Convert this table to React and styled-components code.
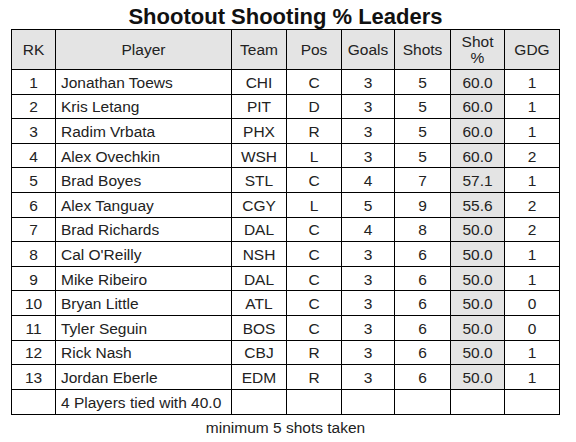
import styled, { createGlobalStyle } from "styled-components";

const GlobalStyle = createGlobalStyle`
  body {
    margin: 0;
    background: #fff;
    font-family: "Liberation Sans", Arial, sans-serif;
    color: #1a1a1a;
  }
`;

const COLS = [44, 176, 55, 55, 53, 56, 54, 55];

const leaders = [
  [1, "Jonathan Toews", "CHI", "C", 3, 5, "60.0", 1],
  [2, "Kris Letang", "PIT", "D", 3, 5, "60.0", 1],
  [3, "Radim Vrbata", "PHX", "R", 3, 5, "60.0", 1],
  [4, "Alex Ovechkin", "WSH", "L", 3, 5, "60.0", 2],
  [5, "Brad Boyes", "STL", "C", 4, 7, "57.1", 1],
  [6, "Alex Tanguay", "CGY", "L", 5, 9, "55.6", 2],
  [7, "Brad Richards", "DAL", "C", 4, 8, "50.0", 2],
  [8, "Cal O'Reilly", "NSH", "C", 3, 6, "50.0", 1],
  [9, "Mike Ribeiro", "DAL", "C", 3, 6, "50.0", 1],
  [10, "Bryan Little", "ATL", "C", 3, 6, "50.0", 0],
  [11, "Tyler Seguin", "BOS", "C", 3, 6, "50.0", 0],
  [12, "Rick Nash", "CBJ", "R", 3, 6, "50.0", 1],
  [13, "Jordan Eberle", "EDM", "R", 3, 6, "50.0", 1],
];

export default function App() {
  return (
    <Page>
      <GlobalStyle />
      <Title>Shootout Shooting % Leaders</Title>
      <Table>
        <colgroup>
          {COLS.map((w, i) => <col key={i} style={{ width: w }} />)}
        </colgroup>
        <thead>
          <tr>
            <Th>RK</Th>
            <Th>Player</Th>
            <Th>Team</Th>
            <Th>Pos</Th>
            <Th>Goals</Th>
            <Th>Shots</Th>
            <Th>Shot<br />%</Th>
            <Th>GDG</Th>
          </tr>
        </thead>
        <tbody>
          {leaders.map((r) => (
            <tr key={r[0]}>
              <Td>{r[0]}</Td>
              <Td left>{r[1]}</Td>
              <Td>{r[2]}</Td>
              <Td>{r[3]}</Td>
              <Td>{r[4]}</Td>
              <Td>{r[5]}</Td>
              <Td shaded>{r[6]}</Td>
              <Td>{r[7]}</Td>
            </tr>
          ))}
          <tr>
            <Td tall />
            <Td tall left>4 Players tied with 40.0</Td>
            <Td tall />
            <Td tall />
            <Td tall />
            <Td tall />
            <Td tall />
            <Td tall />
          </tr>
        </tbody>
      </Table>
      <Note>minimum 5 shots taken</Note>
    </Page>
  );
}

const Page = styled.div`
  width: 576px;
  padding-top: 4px;
`;

const Title = styled.h1`
  margin: 0 0 0 11px;
  width: 549px;
  text-align: center;
  font-size: 22px;
  line-height: 25px;
  font-weight: bold;
  color: #111;
`;

const Table = styled.table`
  margin-left: 11px;
  width: 549px;
  table-layout: fixed;
  border-collapse: collapse;
  font-size: 15.5px;
`;

const Th = styled.th`
  height: 40px;
  padding: 0;
  box-sizing: border-box;
  border: 1px solid #000;
  background: #e4e4e4;
  font-weight: normal;
  line-height: 16px;
  text-align: center;
  color: #222;
`;

const Td = styled.td`
  height: ${(p) => (p.tall ? "25px" : "24.6px")};
  padding: 2px 0 0 ${(p) => (p.left ? "5px" : "0")};
  box-sizing: border-box;
  border: 1px solid #000;
  background: ${(p) => (p.shaded ? "#e4e4e4" : "#fff")};
  text-align: ${(p) => (p.left ? "left" : "center")};
  line-height: 18px;
  white-space: nowrap;
  color: #222;
`;

const Note = styled.div`
  margin: 4px 0 0 11px;
  width: 549px;
  text-align: center;
  font-size: 15.5px;
  color: #222;
`;
